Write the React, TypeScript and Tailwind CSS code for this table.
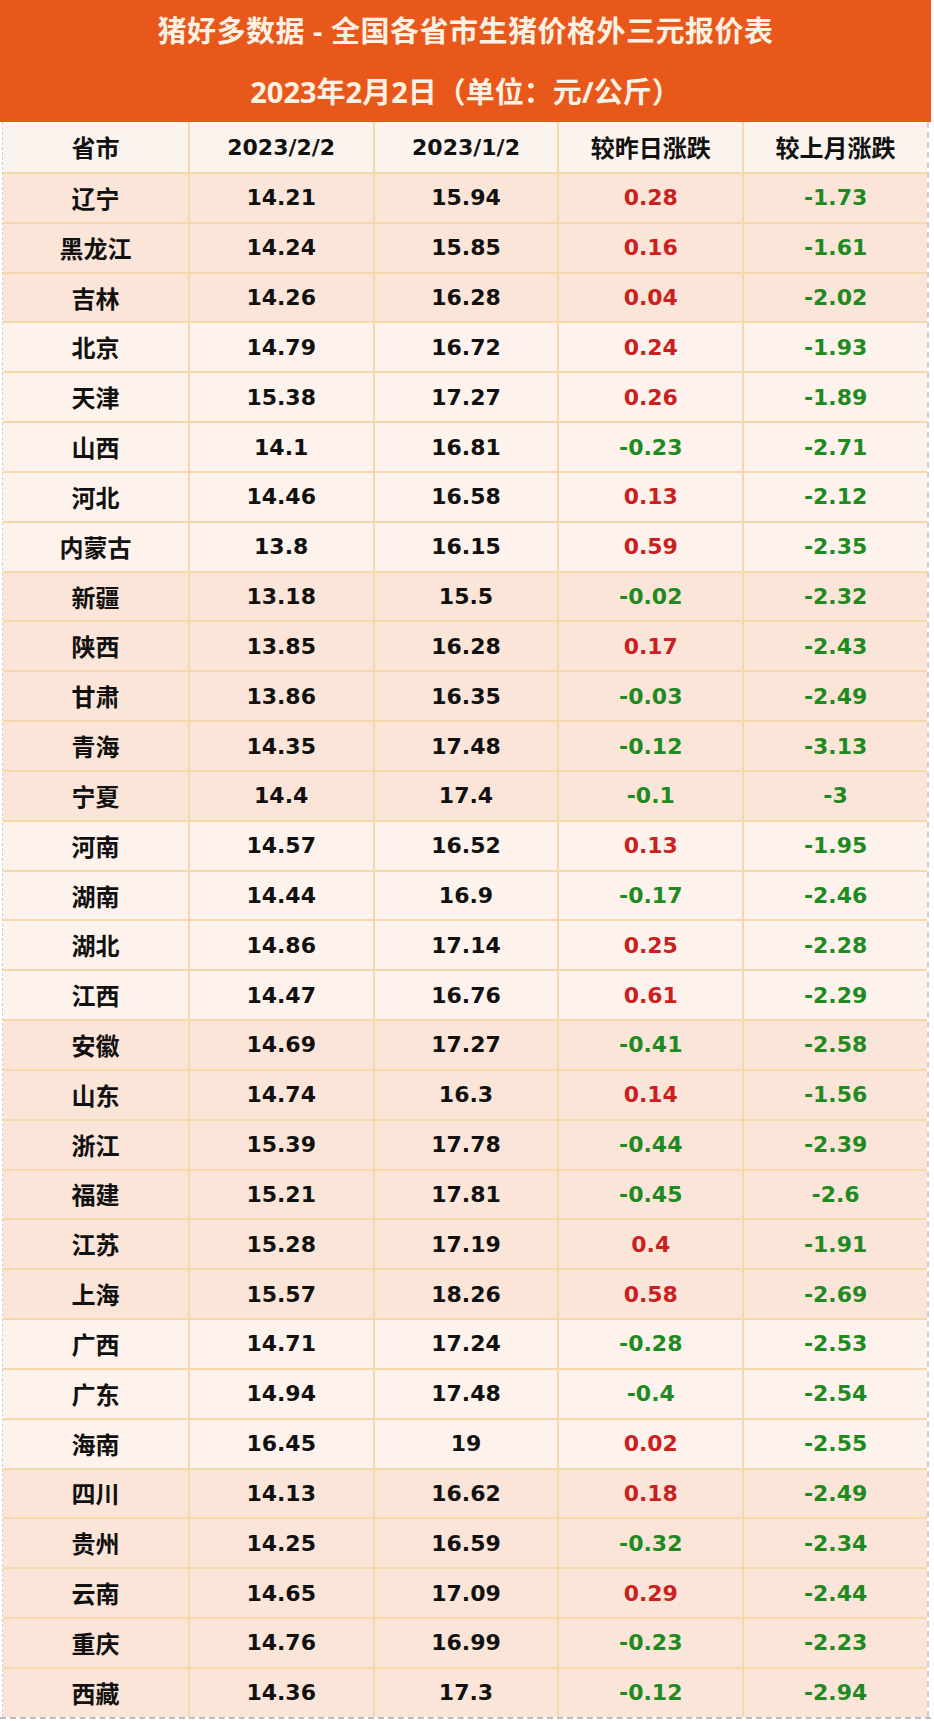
import React from 'react';

type Row = [string, string, string, string, string];

// grouped by region; groups alternate pink / light
const groups: Row[][] = [
    [
        ['辽宁', '14.21', '15.94', '0.28', '-1.73'],
        ['黑龙江', '14.24', '15.85', '0.16', '-1.61'],
        ['吉林', '14.26', '16.28', '0.04', '-2.02'],
    ],
    [
        ['北京', '14.79', '16.72', '0.24', '-1.93'],
        ['天津', '15.38', '17.27', '0.26', '-1.89'],
        ['山西', '14.1', '16.81', '-0.23', '-2.71'],
        ['河北', '14.46', '16.58', '0.13', '-2.12'],
        ['内蒙古', '13.8', '16.15', '0.59', '-2.35'],
    ],
    [
        ['新疆', '13.18', '15.5', '-0.02', '-2.32'],
        ['陕西', '13.85', '16.28', '0.17', '-2.43'],
        ['甘肃', '13.86', '16.35', '-0.03', '-2.49'],
        ['青海', '14.35', '17.48', '-0.12', '-3.13'],
        ['宁夏', '14.4', '17.4', '-0.1', '-3'],
    ],
    [
        ['河南', '14.57', '16.52', '0.13', '-1.95'],
        ['湖南', '14.44', '16.9', '-0.17', '-2.46'],
        ['湖北', '14.86', '17.14', '0.25', '-2.28'],
        ['江西', '14.47', '16.76', '0.61', '-2.29'],
    ],
    [
        ['安徽', '14.69', '17.27', '-0.41', '-2.58'],
        ['山东', '14.74', '16.3', '0.14', '-1.56'],
        ['浙江', '15.39', '17.78', '-0.44', '-2.39'],
        ['福建', '15.21', '17.81', '-0.45', '-2.6'],
        ['江苏', '15.28', '17.19', '0.4', '-1.91'],
        ['上海', '15.57', '18.26', '0.58', '-2.69'],
    ],
    [
        ['广西', '14.71', '17.24', '-0.28', '-2.53'],
        ['广东', '14.94', '17.48', '-0.4', '-2.54'],
        ['海南', '16.45', '19', '0.02', '-2.55'],
    ],
    [
        ['四川', '14.13', '16.62', '0.18', '-2.49'],
        ['贵州', '14.25', '16.59', '-0.32', '-2.34'],
        ['云南', '14.65', '17.09', '0.29', '-2.44'],
        ['重庆', '14.76', '16.99', '-0.23', '-2.23'],
        ['西藏', '14.36', '17.3', '-0.12', '-2.94'],
    ],
];

const cjk = 'font-["Noto_Sans_CJK_SC",sans-serif] text-[24px]';
const num = 'font-["DejaVu_Sans","Noto_Sans_CJK_SC",sans-serif] text-[22px]';

function changeColor(v: string) {
    return v.startsWith('-') ? 'text-[#1f8a22]' : 'text-[#cc1f1f]';
}

function Cell({ children, first, className = '' }: { children: React.ReactNode; first?: boolean; className?: string }) {
    return (
        <div className={`flex items-center justify-center ${first ? '' : 'border-l-2 border-[#f6d9aa]'} ${className}`}>
            {children}
        </div>
    );
}

export default function App() {
    return (
        <div className="w-[934px] h-[1721px] bg-white font-['Noto_Sans','Noto_Sans_CJK_SC',sans-serif]">
            <div className="w-[931px] border-b-2 border-dashed border-[#bdbdbd]">
                {/* Title block */}
                <div className="h-[122px] bg-[#e8581b] flex flex-col text-[#fdf1e4] font-bold">
                    <div className="h-[61px] flex items-center justify-center text-[29px] tracking-[0.5px]">
                        猪好多数据 - 全国各省市生猪价格外三元报价表
                    </div>
                    <div className="h-[61px] flex items-center justify-center text-[29px]">
                        2023年2月2日（单位：元/公斤）
                    </div>
                </div>

                {/* Table */}
                <div className="ml-[2px] w-[927px] border-l border-r-2 border-dashed border-[#cfcfcf] font-bold text-[#111]">
                    <div className="grid grid-cols-5 h-[50px] bg-[#fbf4ee]">
                        <Cell first className={cjk}>省市</Cell>
                        <Cell className={num}>2023/2/2</Cell>
                        <Cell className={num}>2023/1/2</Cell>
                        <Cell className={cjk}>较昨日涨跌</Cell>
                        <Cell className={cjk}>较上月涨跌</Cell>
                    </div>
                    {groups.map((group, gi) => (
                        <div key={gi} className={gi % 2 === 0 ? 'bg-[#fbe5d9]' : 'bg-[#fdf3ec]'}>
                            {group.map((r) => (
                                <div key={r[0]} className="grid grid-cols-5 h-[49.84px] border-t-2 border-[#f6d9aa]">
                                    <Cell first className={cjk}>{r[0]}</Cell>
                                    <Cell className={num}>{r[1]}</Cell>
                                    <Cell className={num}>{r[2]}</Cell>
                                    <Cell className={`${num} ${changeColor(r[3])}`}>{r[3]}</Cell>
                                    <Cell className={`${num} ${changeColor(r[4])}`}>{r[4]}</Cell>
                                </div>
                            ))}
                        </div>
                    ))}
                </div>
            </div>
        </div>
    );
}
